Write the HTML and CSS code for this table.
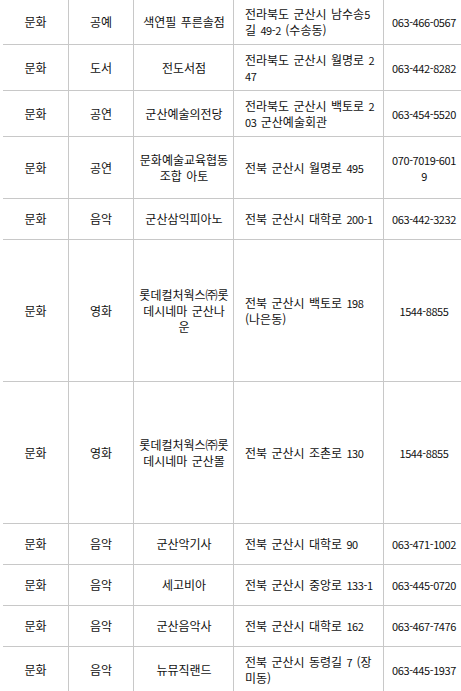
FILE: index.html
```html
<!DOCTYPE html>
<html lang="ko">
<head>
<meta charset="utf-8">
<title>군산 문화시설</title>
<link rel="stylesheet" href="styles.css">
</head>
<body>
<table class="list">
  <colgroup>
    <col class="c-type"><col class="c-cat"><col class="c-name"><col class="c-addr"><col class="c-tel">
  </colgroup>
  <tbody>
    <tr class="h46"><td class="type">문화</td><td class="cat">공예</td><td class="name">색연필 푸른솔점</td><td class="addr">전라북도 군산시 남수송<span class="num">5</span>길 <span class="num">49-2</span> (수송동)</td><td class="tel"><span class="num">063-466-0567</span></td></tr>
    <tr class="h46"><td class="type">문화</td><td class="cat">도서</td><td class="name">전도서점</td><td class="addr">전라북도 군산시 월명로 <span class="num">247</span></td><td class="tel"><span class="num">063-442-8282</span></td></tr>
    <tr class="h46"><td class="type">문화</td><td class="cat">공연</td><td class="name">군산예술의전당</td><td class="addr">전라북도 군산시 백토로 <span class="num">203</span> 군산예술회관</td><td class="tel"><span class="num">063-454-5520</span></td></tr>
    <tr class="h62"><td class="type">문화</td><td class="cat">공연</td><td class="name">문화예술교육협동조합 아토</td><td class="addr">전북 군산시 월명로 <span class="num">495</span></td><td class="tel"><span class="num">070-7019-6019</span></td></tr>
    <tr class="h41"><td class="type">문화</td><td class="cat">음악</td><td class="name">군산삼익피아노</td><td class="addr">전북 군산시 대학로 <span class="num">200-1</span></td><td class="tel"><span class="num">063-442-3232</span></td></tr>
    <tr class="h142"><td class="type">문화</td><td class="cat">영화</td><td class="name">롯데컬처웍스㈜롯데시네마 군산나운</td><td class="addr">전북 군산시 백토로 <span class="num">198</span> (나은동)</td><td class="tel"><span class="num">1544-8855</span></td></tr>
    <tr class="h142"><td class="type">문화</td><td class="cat">영화</td><td class="name">롯데컬처웍스㈜롯데시네마 군산몰</td><td class="addr">전북 군산시 조촌로 <span class="num">130</span></td><td class="tel"><span class="num">1544-8855</span></td></tr>
    <tr class="h41"><td class="type">문화</td><td class="cat">음악</td><td class="name">군산악기사</td><td class="addr">전북 군산시 대학로 <span class="num">90</span></td><td class="tel"><span class="num">063-471-1002</span></td></tr>
    <tr class="h41"><td class="type">문화</td><td class="cat">음악</td><td class="name">세고비아</td><td class="addr">전북 군산시 중앙로 <span class="num">133-1</span></td><td class="tel"><span class="num">063-445-0720</span></td></tr>
    <tr class="h41"><td class="type">문화</td><td class="cat">음악</td><td class="name">군산음악사</td><td class="addr">전북 군산시 대학로 <span class="num">162</span></td><td class="tel"><span class="num">063-467-7476</span></td></tr>
    <tr class="h46"><td class="type">문화</td><td class="cat">음악</td><td class="name">뉴뮤직랜드</td><td class="addr">전북 군산시 동령길 <span class="num">7</span> (장미동)</td><td class="tel"><span class="num">063-445-1937</span></td></tr>
  </tbody>
</table>
</body>
</html>
```
FILE: styles.css
```css
html, body {
  margin: 0;
  padding: 0;
  background: #ffffff;
  overflow: hidden;
}

.list {
  margin: -1px 0 0 3px;
  border-collapse: separate;
  border-spacing: 0;
  table-layout: fixed;
  width: 461px;
  font-family: "Noto Sans CJK KR", sans-serif;
  font-size: 12px;
  line-height: 16px;
  color: #111111;
  word-spacing: 1px;
}

.c-type { width: 66px; }
.c-cat { width: 65px; }
.c-name { width: 100px; }
.c-addr { width: 150px; }
.c-tel { width: 80px; }

.list td {
  box-sizing: border-box;
  padding: 0 5px;
  border-right: 1px solid #c8c8c8;
  border-bottom: 1px solid #c8c8c8;
  text-align: center;
  vertical-align: middle;
  word-break: break-all;
}

.list td.name {
  padding: 0 4px 0 5px;
}

.list td.addr {
  text-align: left;
  padding: 0 7px 0 11px;
}

.list td.tel {
  padding: 0 6px 0 7px;
}

.num {
  font-size: 11px;
  letter-spacing: -0.4px;
}

.h41 { height: 41px; }
.h46 { height: 46px; }
.h62 { height: 62px; }
.h142 { height: 142px; }
```
